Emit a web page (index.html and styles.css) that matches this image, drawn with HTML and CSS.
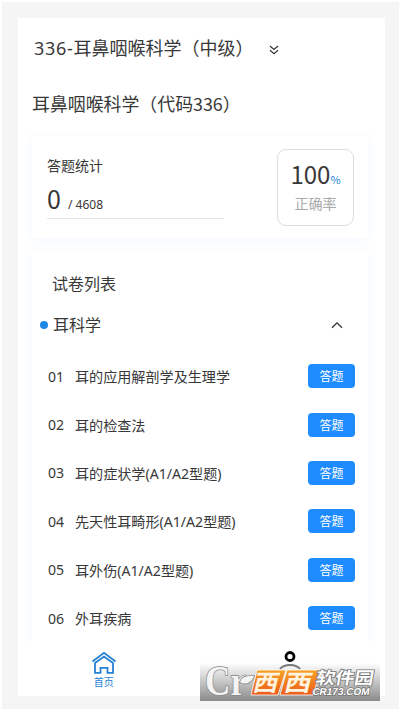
FILE: index.html
```html
<!DOCTYPE html>
<html lang="zh-CN">
<head>
<meta charset="utf-8">
<title>336-耳鼻咽喉科学（中级）</title>
<link rel="stylesheet" href="styles.css">
</head>
<body>
<div class="frame">
  <main class="screen">
    <header class="course">
      <h1><span class="code">336-</span>耳鼻咽喉科学（中级）</h1>
      <svg class="more" width="10" height="10" viewBox="0 0 10 10"><path d="M1 1l4 3.400L9 1M1 5.200l4 3.400 4-3.400"/></svg>
    </header>
    <h2 class="subject">耳鼻咽喉科学（代码336）</h2>

    <section class="card stats">
      <div class="progress">
        <div class="label">答题统计</div>
        <div class="count"><span class="done">0</span><span class="total">/ 4608</span></div>
      </div>
      <div class="rate">
        <div class="value">100<span class="pct">%</span></div>
        <div class="caption">正确率</div>
      </div>
    </section>

    <section class="card papers">
      <h3>试卷列表</h3>
      <div class="group">
        <i class="dot"></i><span class="name">耳科学</span>
        <svg class="fold" width="12" height="8" viewBox="0 0 12 8"><path d="M1 6.800l5-5 5 5"/></svg>
      </div>
      <ul>
        <li><span class="no">01</span><span class="title">耳的应用解剖学及生理学</span><button>答题</button></li>
        <li><span class="no">02</span><span class="title">耳的检查法</span><button>答题</button></li>
        <li><span class="no">03</span><span class="title">耳的症状学(A1/A2型题)</span><button>答题</button></li>
        <li><span class="no">04</span><span class="title">先天性耳畸形(A1/A2型题)</span><button>答题</button></li>
        <li><span class="no">05</span><span class="title">耳外伤(A1/A2型题)</span><button>答题</button></li>
        <li><span class="no">06</span><span class="title">外耳疾病</span><button>答题</button></li>
      </ul>
    </section>

    <nav class="tabs">
      <div class="tab active">
        <svg width="26" height="24" viewBox="0 0 26 24"><path d="M1.500 10.500L13 1.800l11.500 8.700M4 21.800V12l9-6.500 9 6.500v9.800h-5.500v-5h-7v5z"/></svg>
        <span>首页</span>
      </div>
      <div class="tab">
        <svg class="user" width="24" height="20" viewBox="0 0 24 20"><circle cx="12" cy="5.500" r="4"/><path d="M2 18c4-5.500 16-5.500 20 0"/></svg>
      </div>
    </nav>
  </main>
</div>
<svg class="watermark" width="180" height="54" viewBox="0 0 180 54">
  <defs>
    <linearGradient id="haze" x1="0" y1="0" x2="0" y2="1"><stop offset="0" stop-color="#858585" stop-opacity="0"/><stop offset="1" stop-color="#858585" stop-opacity=".95"/></linearGradient>
    <linearGradient id="flame" x1="0" y1="0" x2="0" y2="1"><stop offset="0" stop-color="#f6a223"/><stop offset="1" stop-color="#ee5a1c"/></linearGradient>
  </defs>
  <rect y="8" width="180" height="38" fill="url(#haze)"/>
  <g class="mark">
    <text x="5" y="40" textLength="41" lengthAdjust="spacingAndGlyphs">Cr</text>
    <path d="M40 27c2-6 8-6 14-6-2 6-8 10-14 6z"/>
  </g>
  <path class="tile" d="M57 15h29l-8 25H51zM87 15h34l-8 25H80z"/>
  <g class="brand" transform="skewX(-14)">
    <text x="61" y="36" textLength="25" lengthAdjust="spacingAndGlyphs">西</text>
    <text x="92" y="36" textLength="27" lengthAdjust="spacingAndGlyphs">西</text>
  </g>
  <g class="site" transform="skewX(-10)">
    <text class="soft" x="120" y="29" textLength="58" lengthAdjust="spacingAndGlyphs">软件园</text>
    <text class="url" x="119" y="40" textLength="57" lengthAdjust="spacingAndGlyphs">CR173.COM</text>
  </g>
</svg>
</body>
</html>
```

FILE: styles.css
```css
* { box-sizing: border-box; }
body {
  margin: 0;
  width: 400px;
  height: 711px;
  padding: 2px 1px 2px 2px;
  background: #fff;
  color: #383838;
  font-family: "Noto Sans", "Noto Sans CJK SC", sans-serif;
  overflow: hidden;
}
h1, h2, h3, ul { margin: 0; padding: 0; font-weight: 400; list-style: none; }
svg { display: block; fill: none; flex: none; }

.frame { height: 707px; padding: 16px 14px 13px 16px; background: #f5f5f5; }
.screen {
  display: flex;
  flex-direction: column;
  height: 678px;
  background: #fff;
  overflow: hidden;
}
.course { display: flex; align-items: center; height: 24px; margin: 18px 0 0 16px; }
.course h1 { width: 235px; font-size: 18px; line-height: 24px; white-space: nowrap; }
.code { letter-spacing: .7px; }
.more { margin-top: 3px; stroke: #333; stroke-width: 1.2; }
.subject { margin: 31px 0 0 14px; font: 17.9px/24px "Noto Sans CJK SC", sans-serif; }

.card { margin: 0 17px 0 14px; background: #fff; box-shadow: 0 2px 10px rgba(60, 150, 240, .07); }
.stats { display: flex; justify-content: space-between; height: 102px; margin-top: 21px; padding: 13px 14px 0 15px; flex: none; }
.progress { width: 177px; height: 70px; border-bottom: 1px solid #e4e4e4; }
.label { margin-top: 7px; font-size: 14px; line-height: 20px; }
.count { display: flex; align-items: baseline; height: 34px; margin-top: 5px; line-height: 34px; }
.done { width: 21px; font-family: "Noto Sans CJK SC", sans-serif; font-size: 25px; }
.total { font-size: 12px; }
.rate { width: 77px; height: 77px; border: 1px solid #ddd; border-radius: 9px; text-align: center; }
.value { height: 30px; margin-top: 9px; font: 24px/30px "Noto Sans CJK SC", sans-serif; }
.pct { font-size: 11px; color: #1b87d6; }
.caption { margin-top: 5px; font-size: 14px; line-height: 20px; color: #aaa; }

.papers { flex: 1; margin-top: 13px; min-height: 0; }
.papers h3 { margin: 21px 0 0 20px; font-size: 16px; line-height: 24px; }
.group { display: flex; align-items: center; height: 24px; margin-top: 17px; padding: 0 25px 0 8px; }
.dot { width: 8px; height: 8px; border-radius: 50%; background: #1e88e8; }
.name { flex: 1; margin-left: 5px; font-size: 16px; line-height: 24px; }
.fold { stroke: #333; stroke-width: 1.3; }
.papers ul { margin-top: 15px; }
.papers li { display: flex; align-items: center; height: 48.4px; padding: 0 13px 0 16px; font-size: 14.1px; }
.no { width: 27px; }
.title { flex: 1; white-space: nowrap; }
.papers button {
  width: 47px;
  height: 24px;
  padding: 0;
  border: 0;
  border-radius: 4px;
  background: #1e8cff;
  color: #fff;
  font: 12px/22px "Noto Sans CJK SC", sans-serif;
}

.tabs { display: grid; grid-template-columns: 1fr 1fr; flex: none; height: 54px; background: #fff; }
.tab { display: flex; flex-direction: column; align-items: center; padding: 9px 12px 0 0; }
.active { color: #2581d4; font-size: 10px; line-height: 15px; }
.active svg { stroke: currentColor; stroke-width: 1.8; }
.user { margin-left: 6px; stroke: #000; stroke-width: 2.8; }
.user path { stroke: #777; stroke-width: 2; }

.watermark { position: absolute; left: 200px; top: 655px; }
.mark { fill: #f4f4f4; stroke: #888; stroke-width: 1.6; paint-order: stroke; font: 700 42px "Liberation Serif", serif; }
.tile { fill: url(#flame); stroke: #fff; stroke-width: .8; }
.brand { fill: #fff3df; font: 700 23px "Noto Sans CJK SC", sans-serif; }
.site { fill: #fff; stroke: #777; stroke-width: 1.6; paint-order: stroke; }
.soft { font: 700 17px "Noto Sans CJK SC", sans-serif; }
.url { font: 700 10px "Liberation Sans", sans-serif; }
```
